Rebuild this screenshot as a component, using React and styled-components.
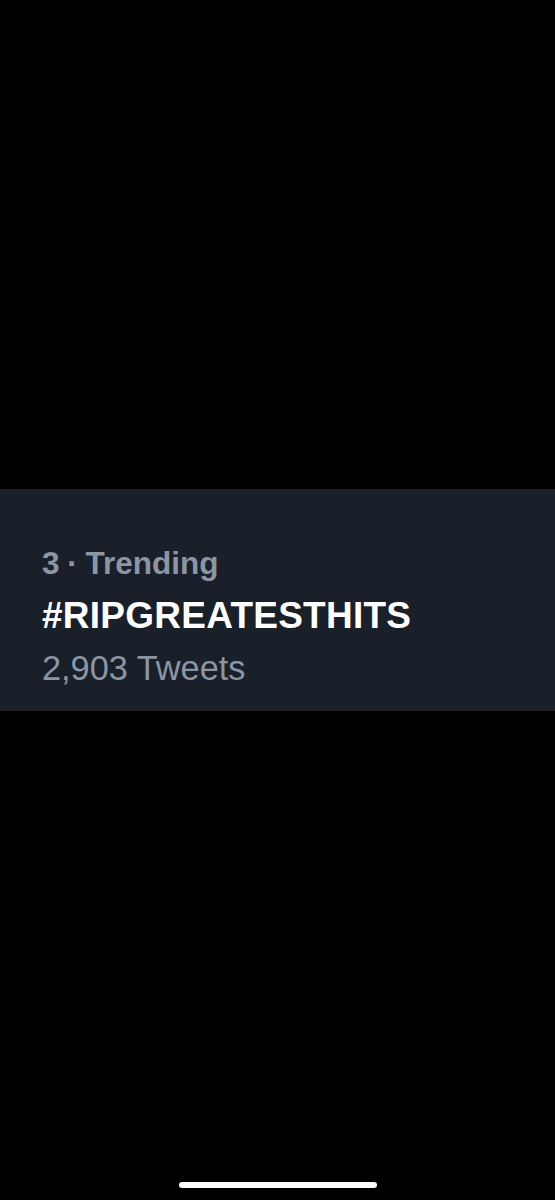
import React from "react";
import styled, { createGlobalStyle } from "styled-components";

const Global = createGlobalStyle`
  html, body { margin: 0; padding: 0; background: #000; }
  body { font-family: "Liberation Sans", Arial, sans-serif; }
`;

const Screen = styled.div`
  width: 555px;
  height: 1200px;
  background: #000;
  display: flex;
  flex-direction: column;
  overflow: hidden;
`;

const TopSpace = styled.div`
  height: 489px;
  flex: none;
`;

const TrendCard = styled.div`
  flex: none;
  height: 222px;
  box-sizing: border-box;
  background: #19202a;
  padding: 48px 42px 0;
  display: flex;
  flex-direction: column;
`;

const Meta = styled.div`
  color: #8b96a3;
  font-weight: 700;
  font-size: 31.5px;
  line-height: 53px;
  word-spacing: -1px;
  white-space: nowrap;
`;

const Tag = styled.div`
  color: #ffffff;
  font-weight: 700;
  font-size: 37px;
  line-height: 52px;
  letter-spacing: 0.25px;
  white-space: nowrap;
`;

const Count = styled.div`
  color: #8b96a3;
  font-weight: 400;
  font-size: 34.3px;
  line-height: 52px;
  white-space: nowrap;
`;

const Rest = styled.div`
  flex: 1;
  display: flex;
  align-items: flex-end;
  justify-content: center;
  padding-bottom: 12px;
`;

const HomeIndicator = styled.div`
  width: 198px;
  height: 6px;
  border-radius: 3px;
  background: #fff;
`;

export default function App() {
  return (
    <Screen>
      <Global />
      <TopSpace />
      <TrendCard>
        <Meta>3 · Trending</Meta>
        <Tag>#RIPGREATESTHITS</Tag>
        <Count>2,903 Tweets</Count>
      </TrendCard>
      <Rest>
        <HomeIndicator />
      </Rest>
    </Screen>
  );
}
